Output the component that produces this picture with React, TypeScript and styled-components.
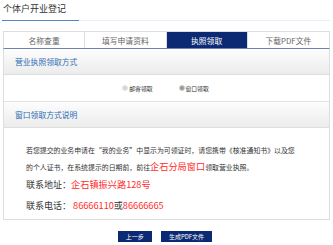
import React from "react";
import styled, { createGlobalStyle } from "styled-components";

const GlobalStyle = createGlobalStyle`
  html, body {
    margin: 0;
    padding: 0;
    background: #fff;
  }
  body {
    font-family: "Noto Sans CJK SC", "Noto Sans", sans-serif;
    color: #333;
  }
`;

const tabs = ["名称查重", "填写申请资料", "执照领取", "下载PDF文件"];

const App = () => {
  return (
    <>
      <GlobalStyle />
      <Page>
        <TitleBar>
          <Title>个体户开业登记</Title>
        </TitleBar>
        <Box>
          <TabBar>
            {tabs.map((t, i) => (
              <Tab key={t} $active={i === 2} $last={i === tabs.length - 1}>
                {t}
              </Tab>
            ))}
          </TabBar>
          <Panel>
            <SectionHead>营业执照领取方式</SectionHead>
            <RadioRow>
              <RadioLabel>
                <Radio />
                邮寄领取
              </RadioLabel>
              <RadioLabel>
                <Radio $checked />
                窗口领取
              </RadioLabel>
            </RadioRow>
            <SectionHead>窗口领取方式说明</SectionHead>
            <Body>
              <Notice>
                若您提交的业务申请在“我的业务”中显示为可领证时，请您携带《核准通知书》以及您
                <br />
                的个人证书，在系统提示的日期前，前往<Red>企石分局窗口</Red>领取营业执照。
              </Notice>
              <Contact>
                联系地址：<Red>企石镇振兴路128号</Red>
              </Contact>
              <Contact $gap={4}>
                联系电话： <Red>86666110</Red>或<Red>86666665</Red>
              </Contact>
            </Body>
          </Panel>
        </Box>
        <Actions>
          <Button>上一步</Button>
          <Button>生成PDF文件</Button>
        </Actions>
      </Page>
    </>
  );
};

export default App;

const Page = styled.div`
  width: 333px;
  padding: 0 3px 0 3px;
  box-sizing: border-box;
`;

const TitleBar = styled.div`
  display: flex;
  margin-left: -1px;
  border-bottom: 1px solid #e4edf8;
  padding-top: 3px;
`;

const Title = styled.div`
  font-size: 9px;
  line-height: 12px;
  color: #333;
  width: 76px;
  padding: 0 0 5px 1px;
  margin-bottom: -1px;
  border-bottom: 1px solid #4f86c6;
`;

const Box = styled.div`
  margin-top: 10px;
  width: 327px;
`;

const TabBar = styled.div`
  display: grid;
  grid-template-columns: repeat(4, 1fr);
  border: 1px solid #dedede;
  border-bottom: 1px solid #6f82ad;
  height: 16px;
`;

const Tab = styled.div<{ $active?: boolean; $last?: boolean }>`
  display: flex;
  align-items: center;
  justify-content: center;
  font-size: 7.8px;
  color: ${(p) => (p.$active ? "#fff" : "#666")};
  background: ${(p) => (p.$active ? "#0b2a73" : "#fff")};
  border-right: ${(p) => (p.$last ? "none" : "1px solid #dedede")};
`;

const Panel = styled.div`
  border: 1px solid #dedede;
  border-top: none;
`;

const SectionHead = styled.div`
  height: 25px;
  display: flex;
  align-items: center;
  padding-left: 11px;
  font-size: 7.8px;
  color: #2d6cb5;
  background: linear-gradient(#fdfdfd, #ececec);
  border-bottom: 1px solid #dedede;
`;

const RadioRow = styled.div`
  height: 26px;
  display: flex;
  align-items: center;
  justify-content: center;
  gap: 26px;
  border-bottom: 1px solid #e4e4e4;
  padding-right: 2px;
`;

const RadioLabel = styled.label`
  display: flex;
  align-items: center;
  gap: 1px;
  font-size: 5.8px;
  color: #333;
`;

const Radio = styled.span<{ $checked?: boolean }>`
  width: 4px;
  height: 4px;
  border-radius: 50%;
  background: ${(p) => (p.$checked ? "#9a9a9a" : "#d6d6d6")};
  border: 1px solid ${(p) => (p.$checked ? "#c9c9c9" : "#e6e6e6")};
  box-sizing: content-box;
`;

const Body = styled.div`
  padding: 14px 10px 5px 22px;
  background: #fff;
`;

const Notice = styled.p`
  margin: 0;
  font-size: 6.9px;
  line-height: 16px;
  color: #333;
  white-space: nowrap;
`;

const Red = styled.span`
  color: #ff2b2b;
  font-size: 9.2px;
`;

const Contact = styled.p<{ $gap?: number }>`
  margin: ${(p) => p.$gap ?? 1}px 0 0;
  font-size: 9px;
  line-height: 16px;
  color: #333;
`;

const Actions = styled.div`
  display: flex;
  justify-content: center;
  gap: 9px;
  margin-top: 11px;
  padding-right: 3px;
`;

const Button = styled.button`
  height: 11px;
  padding: 0 8px;
  border: none;
  background: #0b2a73;
  color: #fff;
  font-family: "Noto Sans CJK SC", sans-serif;
  font-size: 6px;
  line-height: 11px;
  box-shadow: 0 1px 0 #5b6f9e;
`;
